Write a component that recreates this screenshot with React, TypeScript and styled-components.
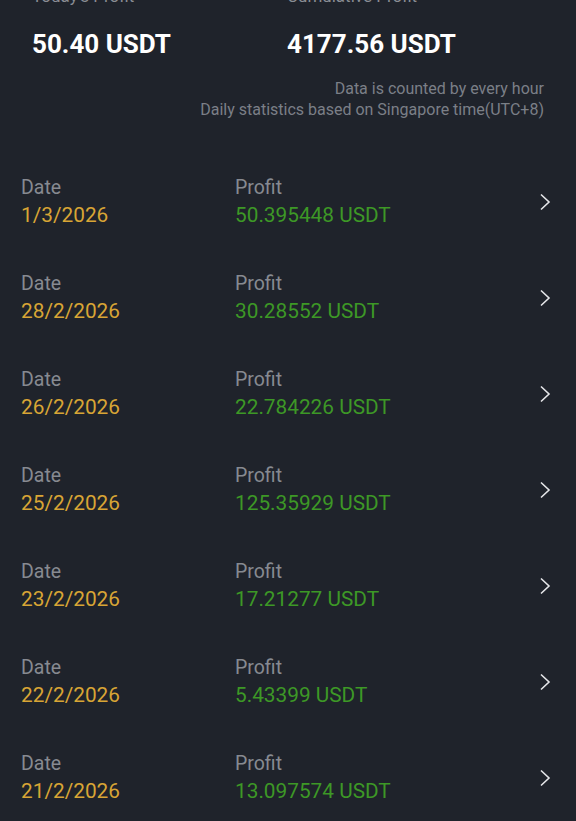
import {createGlobalStyle, styled} from "styled-components";

const GlobalStyle = createGlobalStyle`
  html, body {
    margin: 0;
    padding: 0;
    background: #1f232b;
  }
  body {
    font-family: Roboto, "Liberation Sans", Arial, sans-serif;
    overflow: hidden;
  }
`;

const Page = styled.div`
  width: 576px;
  min-height: 821px;
  background: #1f232b;
  overflow: hidden;
`;

const Summary = styled.div`
  display: grid;
  grid-template-columns: 255px 1fr;
  padding-left: 32px;
  margin-top: -15px;
`;

const SummaryCell = styled.div`
  display: flex;
  flex-direction: column;
  gap: 21px;
`;

const SummaryLabel = styled.span`
  font-size: 17px;
  line-height: 22px;
  color: #8a8d94;
`;

const SummaryValue = styled.span`
  font-size: 26px;
  line-height: 32px;
  font-weight: 700;
  color: #ffffff;
`;

const Note = styled.div`
  margin-top: 18px;
  padding-right: 32px;
  text-align: right;
  font-size: 16px;
  line-height: 21px;
  color: #7b7f87;
`;

const List = styled.div`
  margin-top: 34px;
  display: flex;
  flex-direction: column;
`;

const Row = styled.div`
  display: grid;
  grid-template-columns: 214px 1fr auto;
  align-items: center;
  padding: 21px 25px 21px 21px;
`;

const Field = styled.div`
  display: flex;
  flex-direction: column;
`;

const Label = styled.span`
  font-size: 19.5px;
  line-height: 26px;
  color: #878a91;
`;

const Value = styled.span<{$tone: "date" | "profit"}>`
  font-size: 20.8px;
  line-height: 28px;
  color: ${(p) => (p.$tone === "date" ? "#d8a535" : "#3d9826")};
`;

const Chevron = styled.svg`
  width: 12px;
  height: 18px;
  display: block;
`;

const records = [
  {date: "1/3/2026", profit: "50.395448"},
  {date: "28/2/2026", profit: "30.28552"},
  {date: "26/2/2026", profit: "22.784226"},
  {date: "25/2/2026", profit: "125.35929"},
  {date: "23/2/2026", profit: "17.21277"},
  {date: "22/2/2026", profit: "5.43399"},
  {date: "21/2/2026", profit: "13.097574"},
];

function App() {
  return (
    <Page>
      <GlobalStyle />
      <Summary>
        <SummaryCell>
          <SummaryLabel>Today's Profit</SummaryLabel>
          <SummaryValue>50.40 USDT</SummaryValue>
        </SummaryCell>
        <SummaryCell>
          <SummaryLabel>Cumulative Profit</SummaryLabel>
          <SummaryValue>4177.56 USDT</SummaryValue>
        </SummaryCell>
      </Summary>
      <Note>
        Data is counted by every hour
        <br />
        Daily statistics based on Singapore time(UTC+8)
      </Note>
      <List>
        {records.map((r) => (
          <Row key={r.date}>
            <Field>
              <Label>Date</Label>
              <Value $tone="date">{r.date}</Value>
            </Field>
            <Field>
              <Label>Profit</Label>
              <Value $tone="profit">{r.profit} USDT</Value>
            </Field>
            <Chevron viewBox="0 0 12 18">
              <path d="M2 1.5 L10 9 L2 16.5" fill="none" stroke="#e6e7ea" strokeWidth="1.6" />
            </Chevron>
          </Row>
        ))}
      </List>
    </Page>
  );
}

export default App;
